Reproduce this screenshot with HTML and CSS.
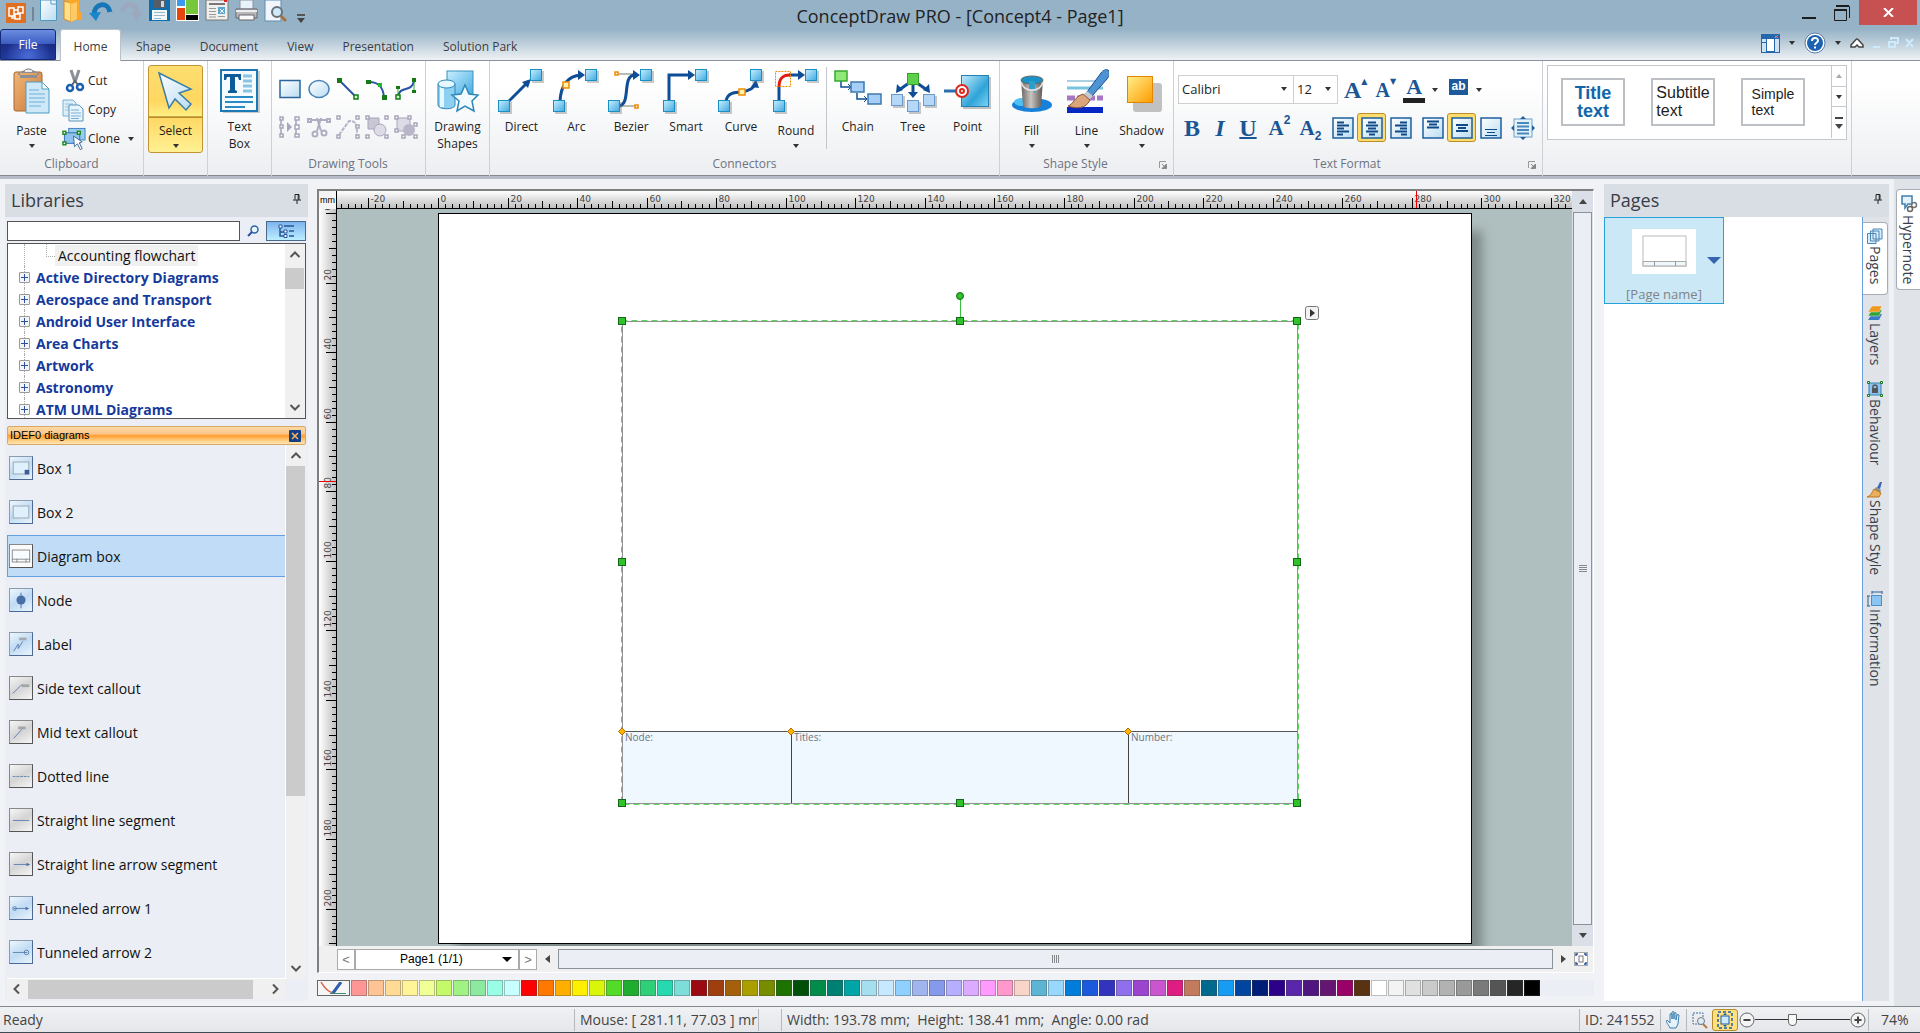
FILE: index.html
```html
<!DOCTYPE html>
<html lang="en">
<head>
<meta charset="utf-8">
<title>ConceptDraw PRO - [Concept4 - Page1]</title>
<link rel="stylesheet" href="styles.css">
</head>
<body>
<svg class="defs" aria-hidden="true">
  <defs>
    <linearGradient id="gBox" x1="0" y1="0" x2="1" y2="1"><stop offset="0" stop-color="#c9efff"/><stop offset="1" stop-color="#3fa9e0"/></linearGradient>
    <linearGradient id="gPale" x1="0" y1="0" x2="1" y2="1"><stop offset="0" stop-color="#fff"/><stop offset="1" stop-color="#b9dcf2"/></linearGradient>
    <linearGradient id="gOrange" x1="0" y1="0" x2="1" y2="1"><stop offset="0" stop-color="#fff08a"/><stop offset="1" stop-color="#ff9a00"/></linearGradient>
    <linearGradient id="gBlue" x1="0" y1="0" x2="0" y2="1"><stop offset="0" stop-color="#3d86c6"/><stop offset="1" stop-color="#0e3f7c"/></linearGradient>
    <linearGradient id="gPoint" x1="0" y1="0" x2="1" y2="1"><stop offset="0" stop-color="#c4ecfb"/><stop offset=".6" stop-color="#2ea3d8"/><stop offset="1" stop-color="#7fd4f5"/></linearGradient>
    <linearGradient id="gCan" x1="0" y1="0" x2="1" y2="0"><stop offset="0" stop-color="#6a625e"/><stop offset=".45" stop-color="#c9c5c2"/><stop offset="1" stop-color="#5b534f"/></linearGradient>
    <linearGradient id="gClip" x1="0" y1="0" x2="1" y2="1"><stop offset="0" stop-color="#f0b878"/><stop offset="1" stop-color="#c9783a"/></linearGradient>
  </defs>
  <symbol id="node" viewBox="0 0 14 14"><rect x="2" y="2" width="12" height="12" fill="#777" opacity=".4"/><rect x=".5" y=".5" width="11" height="11" fill="url(#gBox)" stroke="#1a8fc4"/></symbol>
  <symbol id="nodePale" viewBox="0 0 14 14"><rect x="2" y="2" width="12" height="12" fill="#777" opacity=".4"/><rect x=".5" y=".5" width="11" height="11" fill="#b5d8f8" stroke="#6a9acb"/></symbol>
  <symbol id="pin" viewBox="0 0 8 10"><path d="M2 .5h4v5M2 .5v5M0 6h8M5.200 1v5M4 6v4" stroke="#222" fill="none"/></symbol>
  <symbol id="launch" viewBox="0 0 8 8"><path d="M.5 7V.5H7" stroke="#999" fill="none"/><path d="M3 3l3 3M7.500 3v4.500H3z" stroke="#888" fill="#888"/></symbol>
  <symbol id="alignBox" viewBox="0 0 22 22"><rect x="1" y="1" width="20" height="20" fill="url(#gPale)" stroke="#1c5f9f" stroke-width="1.500"/></symbol>
  <symbol id="chevU" viewBox="0 0 12 12"><path d="M1.500 8L6 3.500 10.500 8" fill="none" stroke="#555" stroke-width="2"/></symbol>
  <symbol id="chevD" viewBox="0 0 12 12"><path d="M1.500 4L6 8.500 10.500 4" fill="none" stroke="#555" stroke-width="2"/></symbol>
  <symbol id="chevL" viewBox="0 0 12 12"><path d="M8 1.500L3.500 6 8 10.500" fill="none" stroke="#555" stroke-width="2"/></symbol>
  <symbol id="chevR" viewBox="0 0 12 12"><path d="M4 1.500L8.500 6 4 10.500" fill="none" stroke="#555" stroke-width="2"/></symbol>
</svg>

<div class="app">
  <header class="titlebar">
    <div class="quick">
      <svg class="logo" width="20" height="20" viewBox="0 0 20 20"><rect width="20" height="20" fill="#df6f22"/><path d="M3 5h5v8H3zM12 4h5v6h-5zM9 11h5v5H9z" fill="none" stroke="#fff" stroke-width="1.500"/><path d="M8 7h4M6 13v2h3" stroke="#fff" stroke-width="1.500" fill="none"/></svg>
      <i class="bar"></i>
      <button aria-label="New"><svg width="17" height="23" viewBox="0 0 17 23"><path d="M.5 0v20.500h16V0z" fill="url(#gPale)" stroke="#4a9ac2"/><path d="M11 0v4h5.500" fill="#fff" stroke="#4a9ac2"/></svg></button>
      <button aria-label="Open"><svg width="20" height="23" viewBox="0 0 20 23"><path d="M1 1l7 2v19l-7-3z" fill="#ffe08a" stroke="#d98a1c"/><path d="M2 0h14v12h2v8h-6l-4 2V4z" fill="#f9a72b"/><path d="M8 4l6-2v17l-6 3z" fill="#ffc964"/></svg></button>
      <button aria-label="Undo"><svg width="24" height="22" viewBox="0 0 24 22"><path d="M5 15C5 3 19 1 21 12" fill="none" stroke="#1576b8" stroke-width="5"/><path d="M0 13l12-1-5 9z" fill="#1a86cc"/></svg></button>
      <button aria-label="Redo"><svg width="24" height="22" viewBox="0 0 24 22" opacity=".5"><path d="M19 15C19 3 5 1 3 12" fill="none" stroke="#a5a0b8" stroke-width="5"/><path d="M24 13l-12-1 5 9z" fill="#a5a0b8"/></svg></button>
      <button aria-label="Save"><svg width="21" height="21" viewBox="0 0 21 21"><path d="M0 0h21v21H0z" fill="#126dad"/><path d="M4 0h13v8H4z" fill="#555d66"/><path d="M12 1h3v6h-3z" fill="#cfd6dc"/><path d="M3 10h15v10H3z" fill="#f4f8fb"/><path d="M5 12.500h11M5 15.500h11M5 18.500h7" stroke="#9bb6cb"/></svg></button>
      <button aria-label="Colour themes"><svg width="23" height="21" viewBox="0 0 23 21"><path d="M0 0h23v21H0z" fill="#fff"/><path d="M1 0h8v6H1z" fill="#3a9af0"/><path d="M10 0h12v14H10z" fill="#76c739"/><path d="M1 8h8v12H1z" fill="#e8440e"/><path d="M10 15h12v5H10z" fill="#000"/></svg></button>
      <button aria-label="Template"><svg width="24" height="21" viewBox="0 0 24 21"><path d="M1 0h22v20H1z" fill="#f1efee" stroke="#777"/><path d="M19 0h3v2h-3z" fill="#d22"/><path d="M4 4h16" stroke="#777" stroke-width="2"/><path d="M4 8.500h7M4 11.500h7M4 14.500h7M4 17h7" stroke="#999"/><path d="M13 7h7v7h-7z" fill="#5aa6cc"/><path d="M15 9l4 4M19 9l-4 4" stroke="#fff"/><path d="M13 16.500h7" stroke="#999"/></svg></button>
      <button aria-label="Print"><svg width="23" height="21" viewBox="0 0 23 21"><path d="M5 0h13v9H5z" fill="#e9f2fb" stroke="#8894a0"/><path d="M1 9h21v9H1z" fill="#b8b8bd" stroke="#66666e"/><path d="M1 11h21" stroke="#eee" stroke-width="2"/><path d="M4 15h15v5H4z" fill="#fafafa" stroke="#666"/></svg></button>
      <button aria-label="Preview"><svg width="23" height="22" viewBox="0 0 23 22"><path d="M1 0h16v21H1z" fill="#f0f6fb" stroke="#5c8db5"/><circle cx="13" cy="12" r="5" fill="#cfe9f8" stroke="#68717a" stroke-width="2"/><path d="M17 16l5 5" stroke="#a8713e" stroke-width="3"/></svg></button>
      <svg class="more" width="8" height="9" viewBox="0 0 8 9"><path d="M0 1h8" stroke="#555" stroke-width="2"/><path d="M0 4h8L4 9z" fill="#444"/></svg>
    </div>
    <h1>ConceptDraw PRO - [Concept4 - Page1]</h1>
    <div class="winbtns">
      <button aria-label="Minimise"><svg width="14" height="16" viewBox="0 0 14 16"><path d="M0 13h14" stroke="#1d1d1d" stroke-width="2"/></svg></button>
      <button aria-label="Restore"><svg width="16" height="16" viewBox="0 0 16 16"><path d="M3 1.500h12.500V13M.5 5h12v10.500H.5z" fill="none" stroke="#1d1d1d"/><path d="M2 1h13M0 5h13" stroke="#1d1d1d" stroke-width="2"/></svg></button>
      <button class="close" aria-label="Close"><svg width="11" height="9" viewBox="0 0 11 9"><path d="M1 0l9 9M10 0L1 9" stroke="#fff" stroke-width="2"/></svg></button>
    </div>
  </header>

  <nav class="tabs">
    <button class="file">File</button>
    <a class="tab on" href="#">Home</a>
    <a class="tab" href="#">Shape</a>
    <a class="tab" href="#">Document</a>
    <a class="tab" href="#">View</a>
    <a class="tab" href="#">Presentation</a>
    <a class="tab" href="#">Solution Park</a>
    <div class="tabs-right">
      <button aria-label="Layout"><svg width="19" height="19" viewBox="0 0 19 19"><path d="M0 0h19v19H0z" fill="#2467ad"/><path d="M14 2l3 2M17 1l-3 3" stroke="#e77"/><path d="M1 5h4v3H1zM1 9h4v9H1zM14 5h4v13h-4z" fill="#cfe2f5"/><path d="M6 5h7v12H6z" fill="#fff"/></svg></button>
      <i class="caret"></i>
      <button aria-label="Help"><svg width="22" height="22" viewBox="0 0 22 22"><circle cx="11" cy="11" r="10" fill="#fff" stroke="#5a7fa8"/><circle cx="11" cy="11" r="8" fill="#1c62b0"/><path d="M8 9c0-4 6-4 6-.5 0 2.500-3 2-3 4.500M11 14.500v2" fill="none" stroke="#fff" stroke-width="2"/></svg></button>
      <i class="caret"></i>
      <svg width="14" height="12" viewBox="0 0 14 12"><path d="M1 8l5-5.500q1-1 2 0L13 8v2H9L7 8l-2 2H1z" fill="#fff" stroke="#444" stroke-width="1.500"/></svg>
      <svg class="mdi" width="42" height="12" viewBox="0 0 42 12"><g stroke="#cfeafc" stroke-width="2" fill="none"><path d="M0 10h7M18 3V1h7v5h-2M16 5h6v5h-6zM33 2l7 8M40 2l-7 8"/></g></svg>
    </div>
  </nav>

  <section class="ribbon">
    <div class="group g-clip">
      <div class="tools">
        <button class="big drop"><svg width="44" height="46" viewBox="0 0 44 46"><rect x="4" y="4" width="28" height="39" rx="2" fill="url(#gClip)" stroke="#a8652e"/><path d="M8 7h21V5H8zM10 5c0-4 17-4 17 0v5H10z" fill="#8c9094"/><path d="M14 4c0-4 9-4 9 0" fill="#eee" stroke="#777"/><path d="M16 14h16l7 7v24H16z" fill="#cfe8f7" stroke="#4b9cc6"/><path d="M32 14v7h7z" fill="#fff" stroke="#4b9cc6"/><path d="M19 22h10M19 26h16M19 30h16M19 34h16M19 38h12" stroke="#6ab0d8"/></svg><span>Paste</span><i class="caret"></i></button>
        <div class="stack">
          <button><svg width="24" height="24" viewBox="0 0 24 24"><path d="M9 1l4 12M17 1l-4 12" stroke="#8b9197" stroke-width="3"/><circle cx="8" cy="19" r="3" fill="none" stroke="#1a5fb0" stroke-width="2.500"/><circle cx="18" cy="18" r="3" fill="none" stroke="#1a5fb0" stroke-width="2.500"/><path d="M10 16l3-4 3 4" stroke="#5c646d" stroke-width="2" fill="none"/></svg>Cut</button>
          <button><svg width="24" height="24" viewBox="0 0 24 24"><path d="M1 2h10l3 3v13H1z" fill="#dbeefa" stroke="#7ab0d2"/><path d="M3 6h8M3 9h8M3 12h8" stroke="#9cc5de"/><path d="M7 7h10l4 4v12H7z" fill="#e9f5fc" stroke="#5b95bd"/><path d="M9 12h8M9 15h10M9 18h10M9 20.500h8" stroke="#79aed0"/></svg>Copy</button>
          <button><svg width="24" height="24" viewBox="0 0 25 24"><rect x="7" y="1" width="17" height="12" fill="#9ccbf0" stroke="#3e83bd"/><rect x="2.500" y="5.500" width="16" height="11" fill="#8fc1ee" stroke="#2c6fb0"/><g fill="#fff" stroke="#1c8a1c" stroke-width="1.500"><rect x="1" y="4" width="3" height="3"/><rect x="16" y="4" width="3" height="3"/><rect x="1" y="15" width="3" height="3"/></g><path d="M12 9l9 6-3 1 3 6-2 1-3-6-3 3z" fill="#fff" stroke="#3a6a98"/></svg>Clone<i class="caret"></i></button>
        </div>
      </div>
      <h2>Clipboard</h2>
    </div>
    <div class="group g-one">
      <div class="tools"><button class="big drop select"><svg width="44" height="44" viewBox="0 0 44 44"><path d="M5 4l32 16-12 4 12 11-5 6-11-11-6 9z" fill="url(#gPale)" stroke="#3a7ea6" stroke-width="1.500"/></svg><span>Select</span><i class="caret"></i></button></div>
    </div>
    <div class="group g-one">
      <div class="tools"><button class="big"><svg width="44" height="44" viewBox="0 0 44 44"><rect x="5" y="2" width="37" height="42" fill="#999" opacity=".5"/><rect x="3" y="1" width="36" height="41" fill="#f5fbff" stroke="#1b7ab5" stroke-width="2"/><path d="M6 5h17v6h-2l-1-3h-3v13l2 1v2H10v-2l2-1V8H9l-1 3H6z" fill="#0d5b98"/><path d="M25 7h9M25 12h9M25 17h9M25 22h9" stroke="#8ac4e4" stroke-width="3"/><path d="M7 28h28M7 33h28M7 38h20" stroke="#2b8cc4" stroke-width="2"/></svg><span>Text<br>Box</span></button></div>
    </div>
    <div class="group g-draw">
      <div class="tools grid5">
        <button aria-label="Rectangle"><svg width="24" height="24" viewBox="0 0 24 24"><rect x="2" y="3.500" width="20" height="17" fill="url(#gPale)" stroke="#2a669d" stroke-width="1.500"/></svg></button>
        <button aria-label="Ellipse"><svg width="24" height="24" viewBox="0 0 24 24"><ellipse cx="12" cy="12" rx="10" ry="8.500" fill="url(#gPale)" stroke="#4a83b5" stroke-width="1.500"/></svg></button>
        <button aria-label="Line"><svg width="24" height="24" viewBox="0 0 24 24"><path d="M4 4l16 16" stroke="#2a52a8" stroke-width="2"/><path d="M1 1h5v5H1z" fill="#157a15"/><rect x="18" y="18" width="4" height="4" fill="#cfc" stroke="#157a15" stroke-width="1.500"/></svg></button>
        <button aria-label="Arc"><svg width="24" height="24" viewBox="0 0 24 24"><path d="M4 5c10 0 14 5 15 15" stroke="#2a52a8" stroke-width="2" fill="none"/><path d="M1 3h5v4H1zM17 18h5v5h-5z" fill="#157a15"/><path d="M13 6h4v4h-4z" fill="#2ab52a"/></svg></button>
        <button aria-label="Curve"><svg width="24" height="24" viewBox="0 0 24 24"><path d="M4 20C5 8 18 16 20 4" stroke="#2a52a8" stroke-width="2" fill="none"/><path d="M4 10v10M20 3v12" stroke="#2ab52a"/><path d="M18 1h4v4h-4zM2 9h4v3H2zM18 13h4v3h-4z" fill="#157a15"/><rect x="2" y="18" width="4" height="4" fill="#cfc" stroke="#157a15" stroke-width="1.500"/></svg></button>
        <button disabled aria-label="Mirror"><svg width="24" height="24" viewBox="0 0 24 24"><path d="M3 3v18M18 3v18M3 3h3M3 21h3" fill="none" stroke="#b9b6c9" stroke-width="2"/><path d="M9 7l5 5-5 5z" fill="#a9a6bb"/><g fill="#fff" stroke="#a9a6bb" stroke-width="1.500"><path d="M2 2h3v3H2zM2 10h3v3H2zM2 19h3v3H2zM17 2h4v3h-4zM17 10h4v4h-4zM17 19h4v3h-4z"/></g></svg></button>
        <button disabled aria-label="Trim"><svg width="24" height="24" viewBox="0 0 24 24"><path d="M2 5h20M14 3l-4 13M10 3l4 13" stroke="#b0adc2" stroke-width="2"/><g fill="#fff" stroke="#b0adc2" stroke-width="2"><path d="M1 4h3v3H1zM20 4h3v3h-3z"/><circle cx="8" cy="19" r="2.500"/><circle cx="17" cy="18" r="2.500"/></g></svg></button>
        <button disabled aria-label="Edit points"><svg width="24" height="24" viewBox="0 0 24 24"><path d="M3 20L13 6c8 0 8 4 8 14" stroke="#b9b6c9" stroke-width="2" fill="none" stroke-dasharray="4 1"/><g fill="#fff" stroke="#a9a6bb" stroke-width="1.500"><path d="M1 1h3v3H1zM20 1h3v3h-3zM1 20h3v3H1zM20 20h3v3h-3zM20 10h3v3h-3z"/></g></svg></button>
        <button disabled aria-label="Union"><svg width="24" height="24" viewBox="0 0 24 24"><path d="M3 3h11v11H3z" fill="#c9c7d6" stroke="#a9a6bb"/><circle cx="15" cy="15" r="6" fill="#dddbe6" stroke="#a9a6bb"/><g fill="#fff" stroke="#a9a6bb" stroke-width="1.500"><path d="M1 1h3v3H1zM20 1h3v3h-3zM1 20h3v3H1zM20 20h3v3h-3z"/></g></svg></button>
        <button disabled aria-label="Group"><svg width="24" height="24" viewBox="0 0 24 24"><path d="M3 3h13v13H3z" fill="#dddbe6" stroke="#a9a6bb"/><circle cx="15" cy="15" r="6" fill="#b9b6c9"/><g fill="#fff" stroke="#a9a6bb" stroke-width="1.500"><path d="M1 1h3v3H1zM14 1h3v3h-3zM1 14h3v3H1zM20 8h3v3h-3zM20 20h3v3h-3zM8 20h3v3H8z"/></g></svg></button>
      </div>
      <h2>Drawing Tools</h2>
    </div>
    <div class="group g-one">
      <div class="tools"><button class="big"><svg width="44" height="44" viewBox="0 0 44 44"><rect x="11" y="2" width="26" height="26" fill="url(#gBox)" stroke="#3892c0"/><path d="M2 15v21c0 5 17 5 17 0V15z" fill="#8ed0f2" stroke="#2c86b8"/><path d="M6 18v20" stroke="#e5f7ff" stroke-width="4"/><ellipse cx="10.500" cy="15" rx="8.500" ry="4" fill="#e5f7ff" stroke="#2c86b8"/><path d="M29 16l4 9 9 1-6 6 2 10-9-5-8 5 2-10-7-6 9-1z" fill="#f2fbff" stroke="#2c86b8" stroke-width="1.500"/></svg><span>Drawing<br>Shapes</span></button></div>
    </div>
    <div class="group g-conn">
      <div class="tools">
        <button class="big"><svg width="46" height="46" viewBox="0 0 46 46"><path d="M9 35L31 13" stroke="#0f4d96" stroke-width="3"/><path d="M33 11l-3 9-6-6z" fill="#0f4d96"/><use href="#node" x="0" y="32" width="14" height="14"/><use href="#node" x="32" y="1" width="14" height="14"/></svg><span>Direct</span></button>
        <button class="big"><svg width="46" height="46" viewBox="0 0 46 46"><path d="M7 33C8 16 16 8 28 7" stroke="#0f4d96" stroke-width="3" fill="none"/><path d="M32 7l-7-5v10z" fill="#0f4d96"/><rect x="10" y="14" width="6" height="6" fill="#fff2a8" stroke="#f08a00" stroke-width="1.500"/><use href="#node" x="0" y="32" width="14" height="14"/><use href="#node" x="32" y="1" width="14" height="14"/></svg><span>Arc</span></button>
        <button class="big"><svg width="46" height="46" viewBox="0 0 46 46"><path d="M9 6h20M12 38h16" stroke="#a4a6a0" stroke-width="1.500"/><path d="M10 38c14 0 3-31 17-31" stroke="#0f4d96" stroke-width="3" fill="none"/><path d="M32 7l-7-5v10z" fill="#0f4d96"/><path d="M7 4h3v3H7zM27 37h3v3h-3z" fill="#fff" stroke="#f08a00" stroke-width="1.500"/><use href="#node" x="0" y="32" width="14" height="14"/><use href="#node" x="32" y="1" width="14" height="14"/></svg><span>Bezier</span></button>
        <button class="big"><svg width="46" height="46" viewBox="0 0 46 46"><path d="M6 34V7h20" stroke="#0f4d96" stroke-width="3" fill="none"/><path d="M32 7l-7-5v10z" fill="#0f4d96"/><use href="#node" x="0" y="32" width="14" height="14"/><use href="#node" x="32" y="1" width="14" height="14"/></svg><span>Smart</span></button>
        <button class="big"><svg width="46" height="46" viewBox="0 0 46 46"><path d="M8 33c2-10 11-8 16-9s12-3 13-8" stroke="#0f4d96" stroke-width="3" fill="none"/><path d="M38 11l-5 8 8 1z" fill="#0f4d96"/><rect x="21" y="21" width="6" height="6" fill="#fff2a8" stroke="#f08a00" stroke-width="1.500"/><use href="#node" x="0" y="32" width="14" height="14"/><use href="#node" x="32" y="1" width="14" height="14"/></svg><span>Curve</span></button>
        <button class="big drop"><svg width="46" height="46" viewBox="0 0 46 46"><path d="M6 34V18M16 7h12" stroke="#0f4d96" stroke-width="3" fill="none"/><path d="M6 19C6 11 9 7 17 7" stroke="#e01d0c" stroke-width="3" fill="none"/><rect x="2.500" y="3.500" width="15" height="15" fill="none" stroke="#f08a00" stroke-dasharray="2 1"/><path d="M32 7l-7-5v10z" fill="#0f4d96"/><use href="#node" x="0" y="32" width="14" height="14"/><use href="#node" x="32" y="1" width="14" height="14"/></svg><span>Round</span><i class="caret"></i></button>
        <i class="vsep"></i>
        <button class="big"><svg width="48" height="46" viewBox="0 0 48 46"><path d="M7 13v6h10M23 25v6h10" stroke="#0f4d96" stroke-width="1.500" fill="none"/><path d="M14 16l3 3-3 3M30 28l3 3-3 3" fill="none" stroke="#0f4d96"/><rect x="1" y="3" width="12" height="10" fill="#90e878" stroke="#38a82f" stroke-width="1.500"/><rect x="17" y="14" width="13" height="10" fill="#a5cffa" stroke="#3e78ad" stroke-width="1.500"/><rect x="34" y="26" width="13" height="10" fill="#a5cffa" stroke="#3e78ad" stroke-width="1.500"/></svg><span>Chain</span></button>
        <button class="big"><svg width="48" height="46" viewBox="0 0 48 46"><path d="M20 15L10 22M24 16v10M28 15l10 7" stroke="#0f4d96" stroke-width="3"/><path d="M7 25l1-9 6 6zM19 24h10l-5 6zM41 25l-7-3 6-6z" fill="#0f4d96"/><use href="#nodePale" x="2" y="26" width="14" height="14"/><use href="#nodePale" x="18" y="32" width="14" height="14"/><use href="#nodePale" x="34" y="26" width="14" height="14"/><rect x="18.500" y="5.500" width="11" height="11" fill="#5dd04a" stroke="#33a02a"/></svg><span>Tree</span></button>
        <button class="big"><svg width="48" height="46" viewBox="0 0 48 46"><rect x="19" y="9" width="28" height="32" fill="#888" opacity=".5"/><rect x="17.500" y="7.500" width="27" height="31" fill="url(#gPoint)" stroke="#2580b0"/><path d="M0 23h12" stroke="#2a6fae" stroke-width="3"/><circle cx="18" cy="23" r="6" fill="#fff" stroke="#e0261a" stroke-width="2"/><circle cx="18" cy="23" r="2" fill="none" stroke="#e0261a" stroke-width="2"/></svg><span>Point</span></button>
      </div>
      <h2>Connectors</h2>
    </div>
    <div class="group g-style">
      <div class="tools">
        <button class="big drop"><svg width="44" height="46" viewBox="0 0 44 46"><ellipse cx="22" cy="37" rx="20" ry="7" fill="#1780d8"/><ellipse cx="12" cy="34" rx="8" ry="4" fill="#4fc0f5"/><path d="M11 12h22l-2 26c-2 3-16 3-18 0z" fill="url(#gCan)"/><ellipse cx="22" cy="12" rx="11" ry="4" fill="#1793c9" stroke="#666"/><path d="M19 13h6v12l-3-3-3 2z" fill="#2d9ec9"/><path d="M11 14c3 11 19 11 22 0" fill="none" stroke="#ddd" stroke-width="2"/></svg><span>Fill</span><i class="caret"></i></button>
        <button class="big drop"><svg width="44" height="46" viewBox="0 0 44 46"><path d="M2 13h36" stroke="#a9cfe2" stroke-width="2"/><path d="M2 20h36" stroke="#79c3df" stroke-width="3"/><path d="M2 30h36" stroke="#a478c4" stroke-width="5" stroke-dasharray="8 2"/><path d="M2 42h36" stroke="#0727c5" stroke-width="6"/><path d="M43 2c3 2 1 6-1 9L27 28l-5-4L36 5c2-3 5-4 7-3z" fill="#4e94d4" stroke="#1b4f8f"/><path d="M22 23l6 5-4 4-6-5z" fill="#c5cad0"/><path d="M18 26l7 6c-4 9-14 9-22 6 6-2 6-9 15-12z" fill="#dba47a" stroke="#8b5630"/></svg><span>Line</span><i class="caret"></i></button>
        <button class="big drop"><svg width="44" height="46" viewBox="0 0 44 46"><rect x="13" y="15" width="29" height="29" rx="3" fill="#888" opacity=".5"/><rect x="7.500" y="8.500" width="25" height="26" fill="url(#gOrange)" stroke="#e08600"/></svg><span>Shadow</span><i class="caret"></i></button>
      </div>
      <h2>Shape Style<svg width="8" height="8"><use href="#launch"/></svg></h2>
    </div>
    <div class="group g-text">
      <div class="tools rows">
        <div class="row1">
          <label class="pick font"><select aria-label="Font"><option>Calibri</option></select></label>
          <label class="pick size"><select aria-label="Font size"><option>12</option></select></label>
          <button class="letter grow">A<b>▲</b></button>
          <button class="letter shrink">A<b>▼</b></button>
          <button class="letter ink">A</button><i class="caret"></i>
          <button class="hl">ab</button><i class="caret"></i>
        </div>
        <div class="row2">
          <button class="letter bold">B</button>
          <button class="letter ital">I</button>
          <button class="letter under">U</button>
          <button class="letter script">A<sup>2</sup></button>
          <button class="letter script">A<sub>2</sub></button>
          <button class="al" aria-label="Align left"><svg width="22" height="22"><use href="#alignBox"/><path d="M5 5.500h7M5 8.500h12M5 11.500h7M5 14.500h12M5 17.500h6" stroke="#0e4a87" stroke-width="2"/></svg></button>
          <button class="al on" aria-label="Align centre"><svg width="22" height="22"><use href="#alignBox"/><path d="M7 5.500h8M5 8.500h12M7 11.500h8M5 14.500h12M8 17.500h6" stroke="#0e4a87" stroke-width="2"/></svg></button>
          <button class="al" aria-label="Align right"><svg width="22" height="22"><use href="#alignBox"/><path d="M10 5.500h7M5 8.500h12M10 11.500h7M5 14.500h12M11 17.500h6" stroke="#0e4a87" stroke-width="2"/></svg></button>
          <i class="gap"></i>
          <button class="al" aria-label="Align top"><svg width="22" height="22"><use href="#alignBox"/><path d="M5 4.500h12M7 7.500h8M5 10.500h12" stroke="#0e4a87" stroke-width="2"/></svg></button>
          <button class="al on" aria-label="Align middle"><svg width="22" height="22"><use href="#alignBox"/><path d="M5 8h12M7 11h8M5 14h12" stroke="#0e4a87" stroke-width="2"/></svg></button>
          <button class="al" aria-label="Align bottom"><svg width="22" height="22"><use href="#alignBox"/><path d="M5 12.500h12M7 15.500h8M5 18.500h12" stroke="#0e4a87"/></svg></button>
          <i class="gap"></i>
          <button class="al" aria-label="Fit text"><svg width="24" height="24" viewBox="0 0 24 24"><rect x="3" y="3" width="18" height="18" fill="#e3f1fb" stroke="#6fa0ca"/><path d="M6 7h12M6 10.500h12M6 14h12M6 17.500h12" stroke="#4a87bd" stroke-width="2"/><path d="M9 3h6l-3-3zM9 21h6l-3 3zM3 9v6l-3-3zM21 9v6l3-3z" fill="#1c5f9f"/></svg></button>
        </div>
      </div>
      <h2>Text Format<svg width="8" height="8"><use href="#launch"/></svg></h2>
    </div>
    <div class="group g-gallery">
      <div class="gallery">
        <button class="t1">Title<br>text</button>
        <button class="t2">Subtitle<br>text</button>
        <button class="t3">Simple<br>text</button>
        <div class="spin"><button aria-label="Up" disabled><i class="caret up"></i></button><button aria-label="Down"><i class="caret"></i></button><button aria-label="More"><svg width="8" height="14" viewBox="0 0 8 14"><path d="M0 2h8" stroke="#444" stroke-width="2"/><path d="M0 8h8L4 13z" fill="#444"/></svg></button></div>
      </div>
    </div>
  </section>

  <main class="work">
    <aside class="panel libs">
      <header class="phead"><h2>Libraries</h2><svg width="8" height="10"><use href="#pin"/></svg></header>
      <div class="search">
        <input type="text" aria-label="Search libraries">
        <button class="find" aria-label="Search"><svg width="12" height="12" viewBox="0 0 12 12"><circle cx="7.500" cy="4.500" r="3.500" fill="#eaf4fc" stroke="#2c66a8" stroke-width="1.500"/><path d="M5 7L1 11" stroke="#2c4fa8" stroke-width="2"/></svg></button>
        <button class="treebtn" aria-label="Tree view"><svg width="17" height="14" viewBox="0 0 17 14"><path d="M2 3v9h4M2 8h4M6 2h10M11 7h5M11 12h5" fill="none" stroke="#27559b" stroke-width="1.500"/><path d="M1 1h3v3H1zM6 6h3v3H6zM6 10.500h3v3H6z" fill="#fff" stroke="#27559b"/></svg></button>
      </div>
      <div class="tree">
        <ul>
          <li class="leaf"><span>Accounting flowchart</span></li>
          <li><i></i>Active Directory Diagrams</li>
          <li><i></i>Aerospace and Transport</li>
          <li><i></i>Android User Interface</li>
          <li><i></i>Area Charts</li>
          <li><i></i>Artwork</li>
          <li><i></i>Astronomy</li>
          <li><i></i>ATM UML Diagrams</li>
        </ul>
        <div class="vscroll"><svg width="12" height="12"><use href="#chevU"/></svg><div class="track"><i class="thumb t-tree"></i></div><svg width="12" height="12"><use href="#chevD"/></svg></div>
      </div>
      <div class="libbar"><span>IDEF0 diagrams</span><button aria-label="Close library"><svg width="12" height="12" viewBox="0 0 12 12"><rect width="12" height="12" rx="1" fill="#123f85"/><path d="M3 3l6 6M9 3L3 9" stroke="#ffb45a" stroke-width="1.500"/></svg></button></div>
      <div class="shapes">
        <ul>
          <li><svg class="ic b" viewBox="0 0 24 24"><rect x="3.500" y="5.500" width="17" height="13" fill="#dff1fd" stroke="#9aa4ac"/><path d="M16 14h5v5h-5z" fill="#3c5c9a"/></svg>Box 1</li>
          <li><svg class="ic b" viewBox="0 0 24 24"><rect x="3.500" y="5.500" width="17" height="13" fill="#dff1fd" stroke="#9aa4ac"/></svg>Box 2</li>
          <li class="on"><svg class="ic" viewBox="0 0 24 24"><rect x="2.500" y="5.500" width="19" height="13" fill="#f8fcff" stroke="#888"/><path d="M2 15.500h20M7.500 15v4M17.500 15v4" stroke="#888"/></svg>Diagram box</li>
          <li><svg class="ic b" viewBox="0 0 24 24"><circle cx="12" cy="12" r="5" fill="#4a6ea8"/><path d="M12 4v17" stroke="#4a6ea8"/></svg>Node</li>
          <li><svg class="ic b" viewBox="0 0 24 24"><path d="M4 20L9 12v5l5-8" fill="none" stroke="#5a7fb0"/><path d="M10 5h8v3h-8z" fill="#a2a9b0"/></svg>Label</li>
          <li><svg class="ic" viewBox="0 0 24 24"><path d="M3 18l9-9h3" fill="none" stroke="#5a7fb0"/><path d="M13 8h8v3h-8z" fill="#a2a5a8"/></svg>Side text callout</li>
          <li><svg class="ic" viewBox="0 0 24 24"><path d="M4 19L13 9" fill="none" stroke="#5a7fb0"/><path d="M9 6h8v3H9z" fill="#a2a5a8"/></svg>Mid text callout</li>
          <li><svg class="ic" viewBox="0 0 24 24"><path d="M3 12.500h18" stroke="#5a7fb0" stroke-dasharray="3 1"/></svg>Dotted line</li>
          <li><svg class="ic" viewBox="0 0 24 24"><path d="M3 12.500h18" stroke="#5a7fb0"/></svg>Straight line segment</li>
          <li><svg class="ic" viewBox="0 0 24 24"><path d="M4 12.500h16" stroke="#5a7fb0"/><path d="M18 10.500v4l4-2z" fill="#4a6ea8"/></svg>Straight line arrow segment</li>
          <li><svg class="ic b" viewBox="0 0 24 24"><path d="M4 12.500h14" stroke="#5a7fb0"/><path d="M17 10.500v4l4-2z" fill="#4a6ea8"/><circle cx="5" cy="12.500" r="2" fill="none" stroke="#5a7fb0"/></svg>Tunneled arrow 1</li>
          <li><svg class="ic b" viewBox="0 0 24 24"><path d="M3 12.500h16" stroke="#5a7fb0"/><circle cx="18" cy="12.500" r="2.500" fill="none" stroke="#5a7fb0"/></svg>Tunneled arrow 2</li>
        </ul>
        <div class="vscroll"><svg width="12" height="12"><use href="#chevU"/></svg><div class="track"><i class="thumb t-list"></i></div><svg width="12" height="12"><use href="#chevD"/></svg></div>
      </div>
      <div class="hscroll"><svg width="12" height="12"><use href="#chevL"/></svg><div class="track"><i class="thumb"></i></div><svg width="12" height="12"><use href="#chevR"/></svg></div>
    </aside>

    <section class="center">
      <div class="frame">
        <div class="unit">mm</div>
        <svg class="hruler" id="hruler"></svg>
        <svg class="vruler" id="vruler"></svg>
        <div class="canvas">
          <div class="page">
            <div class="diagram">
              <div class="space"></div>
              <div class="cells"><div>Node:</div><div>Titles:</div><div>Number:</div></div>
            </div>
            <svg class="selection" viewBox="0 0 720 540" width="720" height="540">
              <g fill="none"><path d="M22.500 41.500h675v482h-675z" stroke="#909490"/><path d="M21.500 40.500h677v484h-677z" stroke="#5bd65b" stroke-dasharray="6 4"/><path d="M360.500 17v23" stroke="#38c238"/></g>
              <g fill="#2fc229" stroke="#14661a"><rect x="18.500" y="37.500" width="7" height="7"/><rect x="356.500" y="37.500" width="7" height="7"/><rect x="693.500" y="37.500" width="7" height="7"/><rect x="18.500" y="278.500" width="7" height="7"/><rect x="693.500" y="278.500" width="7" height="7"/><rect x="18.500" y="519.500" width="7" height="7"/><rect x="356.500" y="519.500" width="7" height="7"/><rect x="693.500" y="519.500" width="7" height="7"/><circle cx="360" cy="16" r="3.500"/></g>
              <g fill="#ffb400" stroke="#b86a00"><path d="M22 448l3.500 3.500L22 455l-3.500-3.500zM191 448l3.500 3.500L191 455l-3.500-3.500zM528 448l3.500 3.500L528 455l-3.500-3.500z"/></g>
              <rect x="705.500" y="26.500" width="13" height="13" rx="2" fill="#f2f2f2" stroke="#777"/><path d="M710 29v8l5-4z" fill="#333"/>
            </svg>
          </div>
        </div>
        <div class="cscroll"><i class="tri u"></i><div class="bartrack"><svg width="8" height="8" viewBox="0 0 8 8"><path d="M0 .5h8M0 2.500h8M0 4.500h8M0 6.500h8" stroke="#888"/></svg></div><i class="tri d"></i></div>
        <div class="foot">
          <div class="pager"><button>&lt;</button><label class="pick"><select aria-label="Page"><option>Page1 (1/1)</option></select></label><button>&gt;</button></div>
          <i class="tri l"></i>
          <div class="bartrack"><svg width="8" height="8" viewBox="0 0 8 8"><path d="M.5 0v8M2.500 0v8M4.500 0v8M6.500 0v8" stroke="#888"/></svg></div>
          <i class="tri r"></i>
          <button class="fitbtn" aria-label="Fit page"><svg width="14" height="14" viewBox="0 0 14 14"><rect x=".5" y=".5" width="13" height="13" fill="#fff" stroke="#aaa"/><path d="M2 4V2h2M10 2h2v2M12 10v2h-2M4 12H2v-2" fill="none" stroke="#2350a0" stroke-width="1.500"/><rect x="5" y="4" width="4" height="6" fill="#fff" stroke="#777"/></svg></button>
        </div>
      </div>
      <div class="palette" id="palette">
        <button class="picker" aria-label="Colour picker"><svg width="27" height="12" viewBox="0 0 27 12"><path d="M1 0c4 7 7 10 12 11" fill="none" stroke="#d8604a" stroke-width="1.500"/><path d="M21 0l-8 11" stroke="#2b5fae" stroke-width="3"/><path d="M10 11.500h16" stroke="#3c8f6c"/></svg></button>
      </div>
    </section>

    <aside class="panel pages">
      <header class="phead"><h2>Pages</h2><svg width="8" height="10"><use href="#pin"/></svg></header>
      <div class="pbody">
        <div class="plist">
          <button class="card">
            <svg width="64" height="45" viewBox="0 0 64 45"><rect width="64" height="45" fill="#fff"/><rect x="11" y="7" width="43" height="30" fill="#fff" stroke="#bbb"/><path d="M11 32.500h43v4.500H11z" fill="#eef8fc" stroke="#aaa"/><path d="M22.500 32v5M43.500 32v5" stroke="#999"/></svg>
            <i class="bluecaret"></i>
            <span>[Page name]</span>
          </button>
        </div>
        <div class="side">
          <button class="on"><svg width="16" height="16" viewBox="0 0 16 16"><g fill="#d9ecf9" stroke="#4b87b5"><path d="M6 1h9v10H6zM3.500 3h8.500v10H3.500zM.5 5.500h8.500v10H.5z"/></g></svg>Pages</button>
          <button><svg width="16" height="16" viewBox="0 0 16 16"><path d="M5 9h10l-3 6H1z" fill="#3a7cc4"/><path d="M5 5h10l-3 6H1z" fill="#2fa336" stroke="#e0e4e9" stroke-width=".500"/><path d="M5 1h10l-3 6H1z" fill="#f09a1c" stroke="#e0e4e9" stroke-width=".500"/></svg>Layers</button>
          <button><svg width="16" height="16" viewBox="0 0 16 16"><rect x="2" y="2" width="12" height="12" fill="#8dc3ef" stroke="#3b7fbd"/><path d="M5 7h6v5H5z" fill="#555"/><path d="M6 7V5q2-2 4 0v2" fill="none" stroke="#555" stroke-width="1.500"/><path d="M.5.5h2v2h-2zM13.500.5h2v2h-2zM.5 13.500h2v2h-2zM13.500 13.500h2v2h-2z" fill="#cfc" stroke="#1c7a1c"/></svg>Behaviour</button>
          <button><svg width="16" height="16" viewBox="0 0 16 16"><path d="M15 0l-2 7-3-1 3-6z" fill="#3a66b5"/><path d="M9 5l5 3-1 3-6-3z" fill="#8b8f94"/><path d="M7 7l7 4-2 4H0c4-1 5-5 7-8z" fill="#ecae5a" stroke="#b97820"/></svg>Shape Style</button>
          <button><svg width="16" height="16" viewBox="0 0 16 16"><rect x="4.500" y="4.500" width="10" height="10" fill="#8cc4f2" stroke="#4b8fce"/><path d="M5 1h10M5 0v3M15 0v3M1 5v10M0 5h3M0 15h3" stroke="#2c5f96"/></svg>Information</button>
        </div>
      </div>
    </aside>
    <div class="outer side"><button class="on"><svg width="18" height="18" viewBox="0 0 18 18"><path d="M2 1h10v8H8l-3 4V9H2z" fill="#e6f2fa" stroke="#3f7fae" stroke-width="1.500"/><circle cx="14" cy="10" r="2.500" fill="none" stroke="#777" stroke-width="1.500"/><circle cx="10" cy="14" r="2.500" fill="none" stroke="#666" stroke-width="1.500"/></svg>Hypernote</button></div>
  </main>

  <footer class="status">
    <span class="ready">Ready</span>
    <span class="cell mouse">Mouse: [ 281.11, 77.03 ] mr</span>
    <span class="cell blank"></span>
    <span class="cell dims">Width: 193.78 mm;&nbsp; Height: 138.41 mm;&nbsp; Angle: 0.00 rad</span>
    <span class="cell id">ID: 241552</span>
    <button class="cell tool" aria-label="Pan"><svg width="16" height="18" viewBox="0 0 16 18"><path d="M4 17c-1-3-5-6-3-8l3 3V3q1-1 2 0v5V1q1.500-1 2 0v7-6q1.500-1 2 0v7l1-5q1-1 2 0l-1 9-2 4z" fill="#e4f2fb" stroke="#3d7fae"/></svg></button>
    <button class="cell tool" aria-label="Zoom area"><svg width="16" height="18" viewBox="0 0 16 18"><rect x="1" y="2" width="10" height="11" fill="none" stroke="#3d6f9e" stroke-dasharray="2 1"/><circle cx="9" cy="10" r="3.500" fill="#dcecf8" stroke="#777"/><path d="M11 13l4 4" stroke="#b5793e" stroke-width="2"/></svg></button>
    <button class="cell tool on" aria-label="Fit window"><svg width="16" height="18" viewBox="0 0 16 18"><rect x="1" y="1" width="14" height="16" fill="none" stroke="#1c5fa8" stroke-width="1.500" stroke-dasharray="3 2"/><rect x="4" y="5" width="8" height="8" fill="#cfe8fb" stroke="#1c5fa8"/><path d="M6 4h4L8 2zM6 14h4l-2 2z" fill="#1c5fa8"/></svg></button>
    <div class="zoom">
      <button aria-label="Zoom out"><svg width="16" height="16" viewBox="0 0 16 16"><circle cx="8" cy="8" r="7" fill="#f4f4f4" stroke="#666"/><path d="M4.500 8h7" stroke="#444" stroke-width="2"/></svg></button>
      <input type="range" aria-label="Zoom" min="0" max="100" value="38">
      <button aria-label="Zoom in"><svg width="16" height="16" viewBox="0 0 16 16"><circle cx="8" cy="8" r="7" fill="#f4f4f4" stroke="#666"/><path d="M4.500 8h7M8 4.500v7" stroke="#444" stroke-width="2"/></svg></button>
    </div>
    <span class="cell pct">74%</span>
  </footer>
</div>
<script src="script.js"></script>
</body>
</html>
```
FILE: styles.css
```css
* { box-sizing: border-box; }
html, body { height: 100%; margin: 0; }
body { font: 13px/17px "Open Sans", "Noto Sans", sans-serif; color: #1e1e1e; background: #f0f2f5; overflow: hidden; }
button, input, select { font: inherit; color: inherit; margin: 0; padding: 0; border: 0; background: none; }
button { display: flex; align-items: center; justify-content: center; }
h1, h2, ul { margin: 0; padding: 0; font-weight: 400; list-style: none; }
svg { display: block; flex: none; }
.defs { position: absolute; width: 0; height: 0; }
.app { display: flex; flex-direction: column; height: 100%; border-bottom: 1px solid #3d4a54; }

.caret { flex: none; width: 0; height: 0; border: 3px solid transparent; border-top: 4px solid #333; border-bottom: 0; }
.caret.up { border-top: 0; border-bottom: 4px solid #aaa; }

/* title bar */
.titlebar { display: grid; grid-template-columns: 1fr auto 1fr; height: 29px; flex: none; background: #96b2c6; }
.quick { display: flex; align-items: flex-start; gap: 6px; padding-left: 6px; }
.quick .logo { margin-top: 3px; }
.quick .bar { width: 2px; height: 14px; margin-top: 7px; background: #6f8798; }
.quick .more { margin: 14px 0 0 4px; }
.titlebar h1 { font-size: 18px; line-height: 33px; color: #222; }
.winbtns { display: flex; justify-content: flex-end; align-items: flex-start; padding-right: 3px; gap: 8px; }
.winbtns button { height: 25px; padding: 0 5px; }
.winbtns .close { width: 58px; margin-left: -4px; background: #c75050; }

/* ribbon tabs */
.tabs { display: flex; align-items: stretch; height: 32px; flex: none; padding-right: 5px; border-bottom: 1px solid #87929c; background: linear-gradient(#96b2c6, #bccdd9 45%, #eef2f5); font-size: 12px; }
.tabs .file { width: 56px; margin-right: 4px; border: 1px solid #142a78; border-radius: 3px 3px 0 0; color: #fff; background: radial-gradient(ellipse at 50% 90%, #4a6bd8, transparent 60%), linear-gradient(#6a8de0, #3d5cc0 48%, #1a2c84 50%, #213a9c); }
.tab { padding: 9px 15px 0 14px; color: #3c3c44; text-decoration: none; }
.tab.on { width: 61px; text-align: center; margin-bottom: -1px; padding: 8px 0 0; margin-right: 1px; background: #fff; border: 1px solid #b8c2ca; border-width: 1px 1px 0; border-radius: 3px 3px 0 0; }
.tabs-right { display: flex; align-items: center; gap: 9px; margin-left: auto; padding-bottom: 3px; }

/* ribbon */
.ribbon { display: flex; flex: none; height: 118px; border-bottom: 3px solid #b5bcc8; background: linear-gradient(#fff 20%, #eceef1); box-shadow: inset 0 -1px #85898f; }
.group { display: flex; flex-direction: column; flex: none; padding: 4px 4px 0; border-right: 1px solid #cdd1d7; }
.group h2 { position: relative; font-size: 12px; line-height: 18px; text-align: center; color: #6d7380; }
.group h2 svg { position: absolute; right: 2px; bottom: 4px; }
.tools { display: flex; height: 90px; }
.big { flex-direction: column; justify-content: flex-start; width: 55px; height: 88px; padding-top: 3px; font-size: 12px; }
.big svg { height: 46px; }
.big span { margin-top: 4px; white-space: nowrap; }
.big.drop span { margin-top: 8px; }
.big .caret { margin-top: 5px; }
.g-clip { width: 144px; }
.stack { display: flex; flex-direction: column; padding: 1px 0 0 3px; }
.stack button { justify-content: flex-start; height: 29px; gap: 2px; font-size: 12px; }
.stack .caret { margin-left: 6px; }
.g-one { width: 64px; }
.select { border: 1px solid #c29432; border-radius: 3px; padding-top: 2px; background: linear-gradient(#fdde70, #ffd661 40%, #ffef83 58%, #b88b2c 59%, #b88b2c 60%, #ffd865 61%, #fff194); }
.g-draw { width: 154px; padding-left: 3px; }
.tools.grid5 { display: grid; grid-template-columns: repeat(5, 29px); grid-template-rows: 38px 38px; padding: 5px 0 0; }
.g-conn { width: 510px; padding-left: 4px; }
.vsep { width: 1px; height: 82px; margin: 2px 3px 0 3px; background: #c3c6cb; }
.g-style { width: 174px; }
.g-text { width: 369px; }
.g-style h2, .g-text h2 { padding-right: 22px; }
.tools.rows { flex-direction: column; padding: 10px 0 0; gap: 9px; }
.row1, .row2 { display: flex; align-items: center; height: 29px; }
.pick { position: relative; display: block; height: 29px; border: 1px solid #cfcfcf; background: #fff; }
.pick::after { content: ""; position: absolute; right: 6px; top: 11px; border: 3px solid transparent; border-top: 4px solid #333; border-bottom: 0; }
.pick select { appearance: none; width: 100%; height: 100%; padding-left: 3px; outline: 0; }
.font { width: 116px; }
.size { width: 45px; margin-left: -1px; }
.letter { font: 700 24px/28px "Liberation Serif", serif; color: #1b5694; }
.row1 .letter { margin-left: 6px; }
.letter b { align-self: flex-start; font: 8px/12px "DejaVu Sans", sans-serif; }
.row1 .shrink { margin-left: 8px; font-size: 20px; }
.row1 .ink { margin: 0 7px 0 7px; width: 22px; height: 26px; font-size: 22px; line-height: 22px; border-bottom: 5px solid #222; }
.hl { width: 19px; height: 16px; margin: 0 8px 6px 11px; font: 700 12px/15px "Liberation Sans", sans-serif; color: #fff; background: #1c5a9c; }
.row2 .letter { width: 28px; }
.ital { font-style: italic; }
.under { text-decoration: underline; text-decoration-thickness: 2px; }
.row2 .script { width: 31px; padding-left: 4px; font-size: 21px; }
.script sup, .script sub { font: 700 12px/12px "Liberation Sans", sans-serif; }
.script sup { align-self: flex-start; }
.script sub { align-self: flex-end; }
.al { width: 29px; height: 29px; }
.script + .al { margin-left: 4px; }
.al.on { border: 1px solid #b98d2b; border-radius: 3px; background: #ffdc6b; }
.gap { width: 3px; }
.g-gallery { width: 309px; }
.gallery { display: flex; align-items: center; height: 75px; padding: 0 0 1px 13px; gap: 26px; border: 1px solid #c4c7cb; background: #fff; font-family: "Liberation Sans", sans-serif; }
.gallery > button { width: 64px; height: 48px; flex: none; border: 2px solid #bcbfc3; text-align: left; background: #fff; }
.gallery .t1 { font-weight: 700; font-size: 18px; line-height: 18px; color: #1166ab; text-align: center; }
.gallery .t2 { font-size: 16px; line-height: 18px; }
.gallery .t3 { font-size: 14px; line-height: 16px; }
.spin { display: grid; grid-template-rows: 20px 20px 1fr; width: 15px; height: 100%; margin-left: auto; border-left: 1px solid #c4c7cb; }
.spin button + button { border-top: 1px solid #c4c7cb; }

/* workspace */
.work { display: flex; flex: 1; min-height: 0; }
.panel { display: flex; flex-direction: column; flex: none; margin: 5px 0; background: #ebeef4; }
.phead { display: flex; align-items: center; justify-content: space-between; height: 33px; flex: none; padding: 0 7px 0 6px; background: #d9dee5; }
.phead h2 { font-size: 18px; line-height: 33px; color: #383d48; }
.libs { width: 303px; margin-left: 5px; padding-bottom: 2px; }
.phead svg { margin-bottom: 4px; }
.search { display: flex; align-items: center; margin: 4px 2px 2px; height: 20px; }
.search input { flex: 1; height: 20px; min-width: 0; border: 1px solid #555; background: #fff; padding: 0 4px; }
.find { width: 26px; }
.treebtn { width: 40px; height: 20px; border: 1px solid #4a6a8a; background: linear-gradient(#7db4ee, #bdeeff); }
.tree { display: flex; height: 176px; margin: 0 2px; flex: none; border: 1px solid #555; background: #fff; overflow: hidden; }
.tree ul { flex: 1; padding-left: 11px; }
.tree li { position: relative; display: flex; align-items: center; gap: 6px; height: 22px; font-size: 14px; font-weight: 700; color: #153a9c; white-space: nowrap; }
.tree li::before { content: ""; position: absolute; left: 5px; top: 0; height: 22px; border-left: 1px dotted #aaa; }
.tree li.leaf { font-weight: 400; color: #111; padding-left: 36px; }
.tree li.leaf::after { content: ""; position: absolute; left: 27px; top: 0; width: 8px; height: 12px; border: 1px dotted #aaa; border-width: 0 0 1px 1px; }
.leaf span { padding: 2px 2px 2px 3px; background: #f0f0f0; }
.tree i:not(.thumb) { position: relative; width: 11px; height: 11px; border: 1px solid #999; border-radius: 1px; background: linear-gradient(#2b4fa0, #2b4fa0) 50% / 7px 1px no-repeat, linear-gradient(#2b4fa0, #2b4fa0) 50% / 1px 7px no-repeat, #f4f4f4; }
.vscroll { display: flex; flex-direction: column; align-items: center; gap: 7px; width: 20px; padding: 5px 0; background: #f0f0f0; }
.vscroll .track { flex: 1; width: 100%; }
.thumb { display: block; background: #cbcbcb; }
.t-tree { height: 21px; width: 19px; }
.t-list { height: 67%; width: 19px; }
.shapes .vscroll { gap: 4px; }
.libbar { display: flex; align-items: center; justify-content: space-between; flex: none; height: 19px; margin: 7px 2px 0; padding: 0 4px 0 2px; border: 1px solid #d9a868; border-radius: 2px; font: 11px/17px "Liberation Sans", sans-serif; background: linear-gradient(#fcd9a4, #fbc68a 40%, #ff9c2c 52%, #ffc878 75%, #ffe6b4); color: #000; }
.shapes { display: flex; flex: 1; min-height: 0; margin: 0 2px; overflow: hidden; }
.shapes ul { flex: 1; padding-top: 2px; border-right: 1px solid #fff; border-bottom: 1px solid #fff; }
.shapes li { display: flex; align-items: center; height: 42px; margin-bottom: 2px; gap: 4px; padding-left: 1px; font-size: 14px; border: 1px solid transparent; border-right: 0; color: #111; }
.shapes li.on { background: #c0dcf6; border-color: #64a0e0; }
.ic { width: 24px; height: 24px; border: 1px solid #888; border-right-color: #555; border-bottom-color: #555; background: linear-gradient(150deg, #f6f6f6, #d4d4d4 50%, #f6f6f6); }
.ic.b { border-color: #8a9bb0 #4c6a94 #4c6a94 #8a9bb0; background: linear-gradient(150deg, #eef6fd, #c0dbf3 50%, #eaf4fc); }
.shapes .on .ic { background: #fafafa; }
.hscroll { display: flex; align-items: center; flex: none; height: 20px; margin: 0 23px 0 2px; padding: 0 4px; gap: 5px; background: #f0f0f0; }
.hscroll .track { flex: 1; }
.hscroll .thumb { width: 225px; height: 19px; }

.center { display: flex; flex-direction: column; flex: 1; min-width: 0; margin: 10px 10px 5px 9px; }
.frame { display: grid; grid-template-columns: 18px minmax(0, 1fr) 21px; grid-template-rows: 18px minmax(0, 1fr) 26px; flex: 1; min-height: 0; border: 2px solid #808080; border-right: 1px solid #fff; border-bottom: 1px solid #fff; background: #f0f0f0; }
.unit { font: 9px/18px "Liberation Sans", sans-serif; text-align: center; color: #000; background: #f4f4f4; border-right: 1px solid #000; }
.hruler, .vruler { width: 100%; height: 100%; overflow: hidden; }
.hruler { border-bottom: 1px solid #000; background: linear-gradient(#fff, #bfbfbf); }
.vruler { border-right: 1px solid #000; background: linear-gradient(90deg, #fff, #bfbfbf); }
.hruler text, .vruler text { font: 9px "DejaVu Sans", sans-serif; fill: #444; }
.canvas { position: relative; overflow: hidden; background: #afbebe; }
.page { position: absolute; left: 101px; top: 4px; width: 1034px; height: 731px; border: 1px solid #000; background: #fff; box-shadow: 14px 14px 10px -4px #7d8888; }
.diagram { position: absolute; left: 184px; top: 107px; width: 675px; height: 483px; display: flex; flex-direction: column; }
.space { flex: 1; }
.cells { display: grid; grid-template-columns: 168px 337px 1fr; height: 73px; border-top: 1px solid #555; border-bottom: 1px solid #444; background: #eff7ff; }
.cells div { padding-left: 2px; font-size: 10px; line-height: 11px; color: #6c7580; }
.cells div + div { border-left: 1px solid #444; }
.selection { position: absolute; left: 161px; top: 66px; }
.cscroll { grid-row: 1 / 3; grid-column: 3; display: flex; flex-direction: column; align-items: center; gap: 8px; padding: 8px 0; background: #dbe0e8; }
.cscroll .bartrack { width: 19px; flex: 1; }
.bartrack { display: flex; align-items: center; justify-content: center; border: 1px solid #8a929c; background: #ebeff5; }
.tri { width: 0; height: 0; border: 4px solid transparent; }
.tri.u { border-top: 0; border-bottom: 5px solid #444; }
.tri.d { border-bottom: 0; border-top: 5px solid #444; }
.tri.l { border-left: 0; border-right: 5px solid #444; }
.tri.r { border-right: 0; border-left: 5px solid #444; }
.foot { grid-column: 1 / 4; display: flex; align-items: center; gap: 8px; padding: 0 5px 0 18px; }
.pager { display: flex; height: 21px; font-family: "Liberation Sans", sans-serif; }
.pager button { width: 18px; border: 1px solid #aaa; background: #fff; color: #777; }
.pager .pick { width: 164px; height: 21px; border-color: #aaa; font-size: 12px; }
.pager .pick::after { border-width: 5px 5px 0; top: 7px; border-top-color: #000; }
.pager select { padding: 0 0 0 44px; color: #000; }
.foot .bartrack { flex: 1; height: 20px; }
.fitbtn { width: 14px; }
.palette { display: flex; gap: 1px; height: 16px; margin: 7px 0 5px; flex: none; background: linear-gradient(#ebeef4, #ebeef4) right / 54px 100% no-repeat; }
.palette button { width: 16px; height: 16px; border: 1px solid rgba(70, 70, 70, .35); }
.palette .picker { width: 33px; border: 1px solid #666; background: #f6f6f6; }

.pages { width: 285px; }
.pbody { display: flex; flex: 1; min-height: 0; }
.plist { flex: 1; background: #fff; border-right: 1px solid #6aa0e0; }
.card { position: relative; flex-direction: column; justify-content: flex-start; width: 120px; height: 87px; padding-top: 11px; gap: 13px; border: 1px solid #28a0d8; background: #cbe8f6; color: #808488; }
.card span { line-height: 15px; }
.bluecaret { position: absolute; right: 2px; top: 39px; border: 7px solid transparent; border-top-color: #3863b0; border-bottom: 0; }
.side { display: flex; flex-direction: column; gap: 4px; padding-top: 5px; background: #e0e4e8; width: 26px; }
.side button { writing-mode: vertical-rl; width: 25px; gap: 2px; padding: 5px 0; border: 1px solid transparent; border-left: 0; font-size: 14px; color: #3a3f4a; white-space: nowrap; justify-content: flex-start; }
.side button.on { min-height: 73px; background: #fff; border-color: #a8adb5; border-radius: 0 4px 4px 0; }
.outer { margin-left: 5px; padding: 10px 0 0 2px; }
.outer.side button.on { border: 1px solid #a8adb5; border-right: 0; border-radius: 4px 0 0 4px; width: 24px; min-height: 99px; }

/* status bar */
.status { display: flex; align-items: center; flex: none; height: 26px; padding: 0 10px 0 3px; border-top: 1px solid #84898e; background: linear-gradient(#f0f1f3, #e4e6ea); color: #444; white-space: nowrap; font-size: 14px; }
.ready { width: 571px; }
.cell { height: 22px; line-height: 21px; padding: 0 5px; border-left: 1px solid #b5b8bd; }
.mouse { width: 184px; padding-right: 0; }
.blank { width: 23px; }
.dims { flex: 1; }
.id { width: 81px; }
.tool { width: 26px; }
.tool.on { border: 1px solid #b98d2b; border-radius: 3px; background: #ffe07c; padding: 0; }
.zoom { display: flex; align-items: center; width: 130px; padding: 0 2px 0 1px; }
.zoom input { flex: 1; min-width: 0; height: 16px; appearance: none; background: linear-gradient(#333, #333) 50% / 100% 1px no-repeat; }
.zoom input::-webkit-slider-thumb { appearance: none; width: 9px; height: 12px; border: 1px solid #666; border-radius: 1px 1px 5px 5px; background: #f8f8f8; }
.pct { padding: 0 0 0 12px; width: 42px; }
```
FILE: script.js
```js
const NS = "http://www.w3.org/2000/svg";
const MM = 3.478;      // pixels per millimetre at 74% zoom

function line(svg, x1, y1, x2, y2, color) {
  const el = document.createElementNS(NS, "line");
  el.setAttribute("x1", x1); el.setAttribute("y1", y1);
  el.setAttribute("x2", x2); el.setAttribute("y2", y2);
  el.setAttribute("stroke", color || "#000");
  svg.append(el);
}

function ruler(id, vertical, origin, cursor) {
  const svg = document.getElementById(id);
  const length = vertical ? svg.clientHeight : svg.clientWidth;
  const first = vertical ? 0 : -28;
  for (let mm = first; origin + mm * MM < length; mm += 2) {
    const p = Math.round(origin + mm * MM) + 0.5;
    const size = mm % 20 === 0 ? 10 : mm % 10 === 0 ? 7 : 4;
    if (vertical) line(svg, 17 - size, p, 17, p); else line(svg, p, 17 - size, p, 17);
    if (mm % 20 === 0) {
      const t = document.createElementNS(NS, "text");
      t.textContent = mm;
      t.setAttribute("transform", vertical ? `translate(12 ${p - 3}) rotate(-90)` : `translate(${p + 2} 11)`);
      svg.append(t);
    }
  }
  const c = Math.round(origin + cursor * MM) + 0.5;
  if (vertical) line(svg, 0, c, 17, c, "#e00"); else line(svg, c, 0, c, 17, "#e00");
}

ruler("hruler", false, 101, 281.11);
ruler("vruler", true, 4, 77.03);

const colors = ("ff9696 ffc496 ffdb96 fff496 f0ff96 c4fa69 a0f285 8ce9a0 98ffe6 c8ffff " +
  "ff0000 ff7800 ffaf00 fff000 d9f50a 54db28 1fad30 2fcf78 26d9b0 7dded9 " +
  "9b0a10 9f3f0e a5600a ab9f00 788c00 1d7300 00500a 008c4b 007f73 00a5a8 " +
  "a5deee c6e9ff 8fd0ff a0b5ee 859aeb b6aeff dcaaff ff9bff ff99cc f9d4c8 " +
  "5eb4d3 98d8ff 007dda 1b59dd 3234be 8f6fee 9d44cf c955cf df1c82 c37b5e " +
  "006a8e 169cf2 0045a0 001e78 2d008a 5926ac 501680 641672 9b0069 593311 " +
  "ffffff f3f3f3 e0e0e0 cacaca b2b2b2 999999 7a7a7a 555555 262626 000000").split(" ");
const palette = document.getElementById("palette");
for (const c of colors) {
  const b = document.createElement("button");
  b.setAttribute("aria-label", "#" + c);
  b.style.background = "#" + c;
  palette.append(b);
}
```
